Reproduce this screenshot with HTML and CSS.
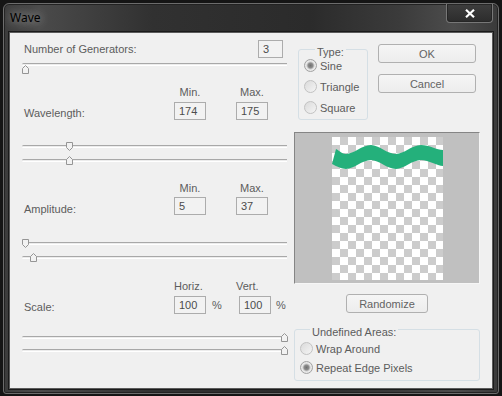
FILE: index.html
```html
<!DOCTYPE html>
<html lang="en">
<head>
    <meta charset="UTF-8">
    <title>Wave</title>
    <link rel="stylesheet" href="styles.css">
</head>
<body>
    <div class="window">
        <div class="titlebar">
            <span class="title">Wave</span>
            <button class="close">
                <svg width="10" height="9" viewBox="0 0 10 9"><path d="M1 0.8 L9 8.2 M9 0.8 L1 8.2" stroke="#fff" stroke-width="2.2"/></svg>
            </button>
        </div>

        <div class="client">
            <div class="left">
                <div class="gen-row">
                    <span class="label">Number of Generators:</span>
                    <span class="field gen">3</span>
                </div>
                <div class="slider first">
                    <div class="track"></div>
                    <span class="thumb up" style="left:0px"><svg width="7" height="9"><path d="M3.5 0.5 L6.5 3.5 V8.5 H0.5 V3.5 Z"/></svg></span>
                </div>

                <!-- wavelength -->
                <div class="param-head wl">
                    <span></span><span>Min.</span><span></span><span>Max.</span>
                </div>
                <div class="param-row wl">
                    <span class="label">Wavelength:</span>
                    <span class="field">174</span>
                    <span></span>
                    <span class="field">175</span>
                </div>
                <div class="sliders wl">
                    <div class="slider">
                        <div class="track"></div>
                        <span class="thumb down" style="left:44px"><svg width="7" height="9"><path d="M3.5 0.5 L6.5 3.5 V8.5 H0.5 V3.5 Z"/></svg></span>
                    </div>
                    <div class="slider">
                        <div class="track"></div>
                        <span class="thumb up" style="left:44px"><svg width="7" height="9"><path d="M3.5 0.5 L6.5 3.5 V8.5 H0.5 V3.5 Z"/></svg></span>
                    </div>
                </div>

                <!-- amplitude -->
                <div class="param-head amp">
                    <span></span><span>Min.</span><span></span><span>Max.</span>
                </div>
                <div class="param-row amp">
                    <span class="label">Amplitude:</span>
                    <span class="field">5</span>
                    <span></span>
                    <span class="field">37</span>
                </div>
                <div class="sliders amp">
                    <div class="slider">
                        <div class="track"></div>
                        <span class="thumb down" style="left:0px"><svg width="7" height="9"><path d="M3.5 0.5 L6.5 3.5 V8.5 H0.5 V3.5 Z"/></svg></span>
                    </div>
                    <div class="slider">
                        <div class="track"></div>
                        <span class="thumb up" style="left:8px"><svg width="7" height="9"><path d="M3.5 0.5 L6.5 3.5 V8.5 H0.5 V3.5 Z"/></svg></span>
                    </div>
                </div>

                <!-- scale -->
                <div class="param-head sc">
                    <span></span><span class="lft">Horiz.</span><span></span><span class="lft">Vert.</span>
                </div>
                <div class="param-row sc">
                    <span class="label">Scale:</span>
                    <span class="field">100</span>
                    <span class="pct">%</span>
                    <span class="field">100</span>
                    <span class="pct second">%</span>
                </div>
                <div class="sliders sc">
                    <div class="slider">
                        <div class="track"></div>
                        <span class="thumb up" style="left:259px"><svg width="7" height="9"><path d="M3.5 0.5 L6.5 3.5 V8.5 H0.5 V3.5 Z"/></svg></span>
                    </div>
                    <div class="slider">
                        <div class="track"></div>
                        <span class="thumb up" style="left:259px"><svg width="7" height="9"><path d="M3.5 0.5 L6.5 3.5 V8.5 H0.5 V3.5 Z"/></svg></span>
                    </div>
                </div>
            </div>

            <div class="right">
                <div class="top-area">
                    <fieldset class="group type-group">
                        <legend>Type:</legend>
                        <label class="radio-row"><span class="radio checked"></span>Sine</label>
                        <label class="radio-row"><span class="radio"></span>Triangle</label>
                        <label class="radio-row"><span class="radio"></span>Square</label>
                    </fieldset>
                    <div class="btn-col">
                        <button class="btn">OK</button>
                        <button class="btn">Cancel</button>
                    </div>
                </div>

                <div class="preview">
                    <svg class="checker" width="111" height="143" viewBox="0 0 111 143">
                        <path fill="#24b07b" d="M4 12 C8 14 10 17 14 17 C22 17 30 8 39 8 C47 8 55 17 64 17 C72 17 80 8 89 8 C97 8 105 13 111 13 L111 29 C105 29 97 23 89 23 C80 23 72 32 64 32 C55 32 47 23 39 23 C30 23 22 32 14 32 C10 32 4 29 0 27 Z"/>
                    </svg>
                </div>

                <button class="btn randomize">Randomize</button>

                <fieldset class="group undef-group">
                    <legend>Undefined Areas:</legend>
                    <label class="radio-row"><span class="radio"></span>Wrap Around</label>
                    <label class="radio-row"><span class="radio checked"></span>Repeat Edge Pixels</label>
                </fieldset>
            </div>
        </div>
    </div>
</body>
</html>
```

FILE: styles.css
```css
* {
    box-sizing: border-box;
}
body {
    margin: 0;
    padding: 3px;
    background: #151515;
    font-family: "Liberation Sans", Arial, sans-serif;
    font-size: 11px;
    color: #5c5c5c;
}
.window {
    width: 496px;
    height: 391px;
    border: 1px solid #6c6c6c;
    border-radius: 6px 6px 3px 3px;
    background: linear-gradient(90deg, #3c3c3c 0%, #4b4b4b 7%, #313131 30%, #2b2b2b 62%, #3b3b3b 80%, #4c4c4c 91%, #3a3a3a 100%);
    box-shadow: inset 0 0 0 1px #222;
}
.titlebar {
    height: 28px;
    display: flex;
    justify-content: space-between;
    align-items: flex-start;
    padding: 0 5px 0 6px;
}
.title {
    margin-top: 6px;
    line-height: 16px;
    font-family: "Noto Sans", "Liberation Sans", sans-serif;
    font-size: 12px;
    color: #000;
    text-shadow: 0 0 8px rgba(255,255,255,0.55), 0 0 16px rgba(255,255,255,0.35);
}
.close {
    width: 47px;
    height: 19px;
    padding: 0;
    border: 1px solid #777;
    border-top: none;
    border-radius: 0 0 4px 4px;
    background: linear-gradient(#3e3e3e, #2c2c2c);
    box-shadow: inset 0 0 0 1px #262626;
    display: flex;
    align-items: center;
    justify-content: center;
}
.client {
    margin: 0 5px;
    height: 357px;
    border: 1px solid #5b5b5b;
    box-shadow: 0 0 0 1px #1b1b1b;
    background: #f0f0f0;
    display: flex;
    gap: 7px;
    padding: 7px 12px 0;
}
.left {
    width: 265px;
}
.right {
    width: 186px;
    display: flex;
    flex-direction: column;
}

/* left side */
.gen-row {
    display: flex;
    justify-content: space-between;
    align-items: center;
    height: 18px;
    padding: 0 4px 0 2px;
}
.field {
    display: block;
    width: 32px;
    height: 18px;
    border: 1px solid #acacac;
    background: #f2f2f2;
    padding-left: 4px;
    line-height: 16px;
    color: #4c4c4c;
}
.field.gen {
    width: 25px;
}
.slider {
    position: relative;
    height: 12px;
}
.slider.first {
    margin-top: 2px;
}
.track {
    margin-top: 5px;
    height: 3px;
    background: #ececec;
    border-top: 1px solid #a8a8a8;
    border-bottom: 1px solid #fff;
    border-radius: 2px 0 0 2px;
}
.thumb {
    position: absolute;
    top: 2px;
    width: 7px;
    height: 9px;
}
.thumb svg {
    display: block;
}
.thumb path {
    fill: #f2f2f2;
    stroke: #959595;
    stroke-width: 1;
}
.thumb.down svg {
    transform: scaleY(-1);
}
.param-head,
.param-row {
    display: grid;
    grid-template-columns: 150px 32px 30px 32px;
    padding-left: 2px;
}
.param-head {
    height: 14px;
    line-height: 14px;
    text-align: center;
}
.param-head .lft {
    text-align: left;
}
.param-row .label {
    margin-top: 5px;
    line-height: 13px;
}
.param-row.sc {
    grid-template-columns: 150px 32px 33px 32px auto;
}
.pct {
    padding-left: 6px;
    line-height: 18px;
}
.pct.second {
    padding-left: 5px;
}
.param-head.wl { margin-top: 10px; }
.param-row.wl { margin-top: 3px; }
.param-head.amp { margin-top: 15px; }
.param-row.amp { margin-top: 2px; }
.param-row.amp .label { margin-top: 6px; }
.param-head.sc { margin-top: 16px; }
.param-row.sc { margin-top: 3px; }
.sliders {
    display: flex;
    flex-direction: column;
    gap: 2px;
}
.sliders.wl { margin-top: 20px; }
.sliders.amp { margin-top: 21px; }
.sliders.sc { margin-top: 17px; gap: 1px; }

/* right side */
.top-area {
    display: flex;
    align-items: flex-start;
    height: 81px;
}
.group {
    margin: 0;
    min-width: 0;
    border: 1px solid #d5dfe5;
    border-radius: 3px;
    padding: 0 0 2px 5px;
}
.group legend {
    padding: 6px 2px 0;
    line-height: 13px;
    color: #5c5c5c;
}
.type-group {
    width: 70px;
    margin-left: 4px;
}
.type-group legend {
    margin-left: 11px;
}
.radio-row {
    display: flex;
    align-items: center;
    gap: 3px;
    height: 19px;
}
.type-group .radio-row:first-of-type {
    margin-top: -3px;
}
.type-group .radio-row + .radio-row {
    margin-top: 2px;
}
.radio {
    width: 13px;
    height: 13px;
    flex: none;
    border-radius: 50%;
    border: 1px solid #c2c2c2;
    background: linear-gradient(135deg, #dadada, #f5f5f5);
}
.radio.checked {
    border-color: #a2a2a2;
    background: radial-gradient(circle, #707070 0, #8e8e8e 2.5px, #c8c8c8 3.5px, #ececec 4.5px, #e2e2e2 6px);
}
.btn-col {
    margin-left: 10px;
    margin-top: 4px;
    display: flex;
    flex-direction: column;
    gap: 11px;
}
.btn {
    width: 98px;
    height: 19px;
    padding: 0;
    border: 1px solid #b0b0b0;
    border-radius: 3px;
    background: linear-gradient(#f5f5f5, #ededed);
    font-family: inherit;
    font-size: 11px;
    color: #636363;
}
.preview {
    margin-top: 11px;
    height: 152px;
    border: 1px solid;
    border-color: #858585 #f6f6f6 #f6f6f6 #858585;
    background: #c0c0c0;
    display: flex;
    justify-content: center;
    align-items: center;
}
.checker {
    display: block;
    background-color: #fff;
    background-image: conic-gradient(#cccccc 25%, #fff 0 50%, #cccccc 0 75%, #fff 0);
    background-size: 16px 16px;
}
.randomize {
    width: 82px;
    align-self: center;
    margin-top: 10px;
}
.undef-group {
    margin-top: 7px;
    padding-bottom: 3px;
}
.undef-group legend {
    margin-left: 10px;
}
```
